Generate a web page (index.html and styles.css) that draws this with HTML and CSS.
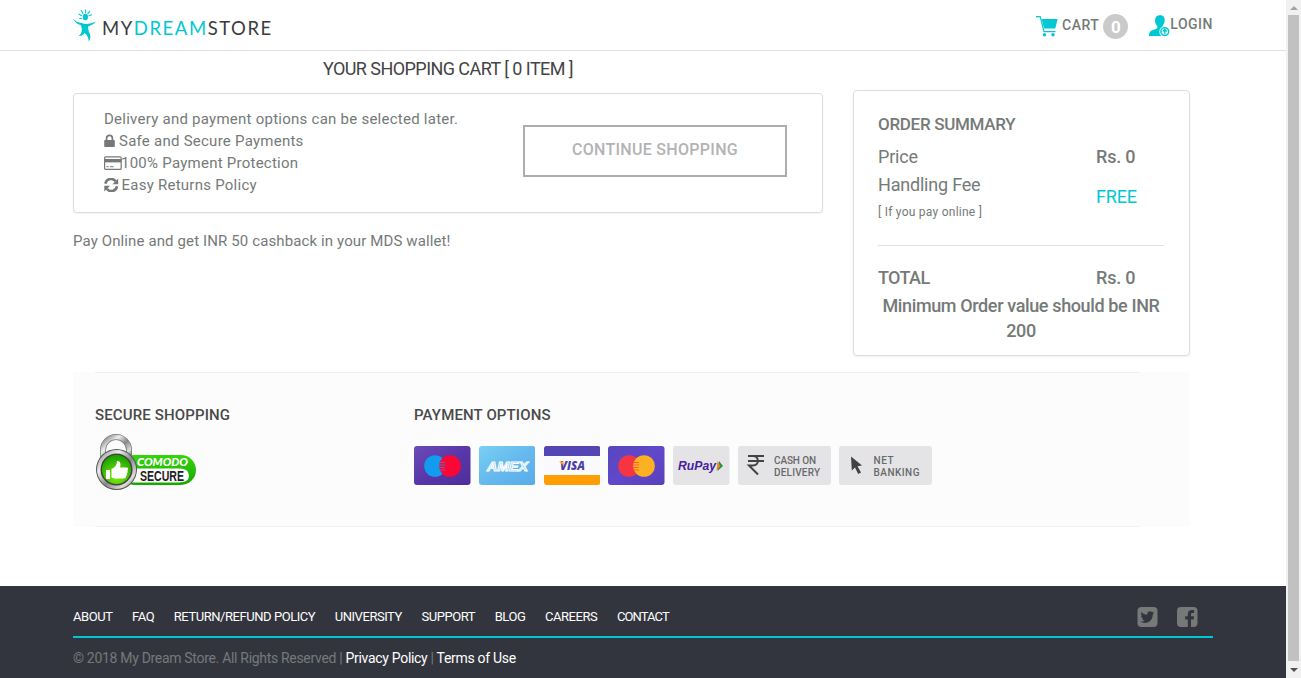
FILE: index.html
```html
<!DOCTYPE html>
<html lang="en">
<head>
<meta charset="utf-8">
<title>My Dream Store - Shopping Cart</title>
<link rel="stylesheet" href="styles.css">
</head>
<body>
<div class="window">
<div class="page">
  <header class="header">
    <div class="container header-row">
      <a class="logo">
        <svg class="logo-mark" width="24" height="33" viewBox="0 0 24 33" fill="#00c8d2">
          <ellipse cx="12.400" cy="8" rx="2.600" ry="3.300"/>
          <path d="M0 9.800c2 2.400 4.500 3.600 7.500 4 1.700.300 3 1.200 5.500 1.100 3.500-.100 6.500-.800 10-2.400-1.800 2.700-4.800 4-7.600 4.700-.600 3 .200 4.800 1.300 7.300 1 2.500 1 5-.800 8.200-.200-3.500-1.700-6.300-4.200-8.900-.900 2-2.700 3.100-6.200 3.200 2.200-1.400 3.200-3.300 3.300-5.900.100-2-.300-3.600-1.100-5C4.300 15.200 1.300 13.200 0 9.800z"/>
          <path d="M12.600 4V.600M10.200 4.800L8 1.400M14.600 4.800l2.500-3M9 6.800L5.500 5M15.500 7l3.300-1.200M9 9.200L6.200 9.700" stroke="#00c8d2" stroke-width="1.100" fill="none"/>
        </svg>
        <span class="logo-text">MY<b>DREAM</b>STORE</span>
      </a>
      <nav class="account">
        <a class="cart">
          <svg width="22" height="22" viewBox="0 0 22 22" fill="#00c8d2">
            <path d="M0 .6h4.200L8 15.600h11.500" fill="none" stroke="#00c8d2" stroke-width="1.200"/>
            <path d="M5.600 3h16l-2.300 9.500H8z"/><circle cx="8.500" cy="18.800" r="1.700"/><circle cx="17" cy="18.800" r="1.700"/>
          </svg>
          <span class="cart-label">CART</span><span class="badge">0</span>
        </a>
        <a class="login">
          <svg width="21" height="22" viewBox="0 0 21 22" fill="#00c8d2">
            <path d="M6 5.500C6 2 8 .2 11 .2s5 1.900 4.700 5.300C15.400 8.500 14 10 13.500 11.500c0 2.500 3.500 2 4.500 4.500v5H0c0-4 1.500-5.200 4.500-6.200 2.500-.8 4-1.200 4-3.300C7 9.500 6 8 6 5.500z"/>
            <circle cx="15.800" cy="16.600" r="5.500" fill="#fff"/><circle cx="15.800" cy="16.600" r="3.900" fill="#fff" stroke="#00c8d2" stroke-width="1.500"/>
            <path d="M15.800 19.200v-4M13.700 16.500l2.100-2.100 2.100 2.100" fill="none" stroke="#00c8d2" stroke-width="1.400"/>
          </svg>
          <span class="login-label">LOGIN</span>
        </a>
      </nav>
    </div>
  </header>

  <main class="container">
    <div class="columns">
      <section class="left">
        <h1 class="title">YOUR SHOPPING CART [ 0 ITEM ]</h1>
        <div class="card info">
          <div class="perks">
            <div>Delivery and payment options can be selected later.</div>
            <div><svg class="ico-lock" width="11" height="14" viewBox="0 0 11 14"><path d="M1 6h9a.8.8 0 0 1 .8.800v5.400a.8.8 0 0 1-.8.800H1a.8.8 0 0 1-.8-.8V6.800A.8.8 0 0 1 1 6z" fill="#757a78"/><path d="M2.600 6.500V4.300a2.900 2.900 0 0 1 5.800 0v2.200" fill="none" stroke="#757a78" stroke-width="1.700"/></svg>Safe and Secure Payments</div>
            <div><svg class="ico-card" width="18" height="14" viewBox="0 0 18 14"><rect x=".6" y=".8" width="16.600" height="12.600" rx="1" fill="none" stroke="#757a78" stroke-width="1.200"/><path d="M.6 3h16.600v3.400H.6z" fill="#757a78"/><path d="M2.400 10.700h2.300M6 10.700h3.600" stroke="#757a78"/></svg>100% Payment Protection</div>
            <div><svg class="ico-sync" width="15" height="14" viewBox="0 0 15 14"><path d="M1.400 5.700A5.600 5.600 0 0 1 11.600 3.400M13 8.300A5.600 5.600 0 0 1 2.800 10.600" fill="none" stroke="#757a78" stroke-width="2.500"/><path d="M14.200.500v5.700H8.500zM.3 13.500V7.800H6z" fill="#757a78"/></svg>Easy Returns Policy</div>
          </div>
          <a class="button">CONTINUE SHOPPING</a>
        </div>
        <p class="promo">Pay Online and get INR 50 cashback in your MDS wallet!</p>
      </section>

      <aside class="card summary">
        <h2>ORDER SUMMARY</h2>
        <div class="line price"><span>Price</span><strong>Rs. 0</strong></div>
        <div class="line fee"><div><div>Handling Fee</div><small>[ If you pay online ]</small></div><span class="free">FREE</span></div>
        <div class="line total"><strong class="total-label">TOTAL</strong><strong>Rs. 0</strong></div>
        <p class="minimum">Minimum Order value should be INR 200</p>
      </aside>
    </div>

    <section class="trust">
      <div class="secure">
        <h3>SECURE SHOPPING</h3>
        <svg class="comodo" width="104" height="60" viewBox="0 0 104 60">
          <defs>
            <linearGradient id="steel" x1="0" y1="0" x2="1" y2="1"><stop offset="0" stop-color="#777"/><stop offset=".3" stop-color="#eee"/><stop offset=".55" stop-color="#888"/><stop offset=".8" stop-color="#ddd"/><stop offset="1" stop-color="#444"/></linearGradient>
            <linearGradient id="pill" x1="0" y1="0" x2="0" y2="1"><stop offset="0" stop-color="#35d60d"/><stop offset="1" stop-color="#18a600"/></linearGradient>
            <radialGradient id="orb" cx=".5" cy=".75" r=".7"><stop offset="0" stop-color="#86ed10"/><stop offset="1" stop-color="#1ba400"/></radialGradient>
          </defs>
          <path d="M8 27V17a13 13 0 0 1 26 0v10" fill="none" stroke="#777" stroke-width="6"/>
          <path d="M8 27V17a13 13 0 0 1 26 0v10" fill="none" stroke="url(#steel)" stroke-width="4.500"/>
          <rect x="24" y="22" width="77" height="30" rx="15" fill="url(#pill)"/>
          <path d="M38 35.500h46q10 0 10 7T84 49.500H34z" fill="#fff"/>
          <circle cx="21.500" cy="36.500" r="20.500" fill="#555"/><circle cx="21.500" cy="36.500" r="19.500" fill="url(#steel)"/>
          <circle cx="21.500" cy="36.500" r="16" fill="#3c463a"/><circle cx="21.500" cy="36.500" r="14.500" fill="url(#orb)"/>
          <path d="M11 37h4v9h-4zM16.500 36c3.500-1.500 5.500-4 5.500-8 3-.5 4.300 2.500 3 6.500h6.500c2 0 2 2.500.8 3 .8 1 .4 2.300-.4 2.800.5 1.200 0 2.200-.9 2.500.2 1.500-.5 2.700-2.500 2.700h-9l-3-1z" fill="#fff"/>
          <text x="42" y="32.500" textLength="51" lengthAdjust="spacingAndGlyphs" class="comodo-name">COMODO</text>
          <text x="45" y="47.500" textLength="44" lengthAdjust="spacingAndGlyphs" class="comodo-secure">SECURE</text>
        </svg>
      </div>
      <div class="payments">
        <h3>PAYMENT OPTIONS</h3>
        <div class="methods">
          <svg width="56.500" height="39" viewBox="0 0 56.500 39"><defs><linearGradient id="mae" x2="1" y2="1"><stop stop-color="#6b4bb8"/><stop offset=".5" stop-color="#5a37a8"/><stop offset="1" stop-color="#4e2d9c"/></linearGradient></defs><rect width="56.500" height="39" rx="3" fill="url(#mae)"/><circle cx="21" cy="20" r="10.800" fill="#129cf0"/><circle cx="36" cy="20" r="10.800" fill="#fb0635"/><path d="M26 16.500h5M25 19h6M25 21.500h6M26 24h5" stroke="#6d63bf"/></svg>
          <svg width="56.500" height="39" viewBox="0 0 56.500 39"><defs><linearGradient id="amx" x2="1" y2="1"><stop stop-color="#79d0f3"/><stop offset=".5" stop-color="#65b9ee"/><stop offset="1" stop-color="#58ade9"/></linearGradient></defs><rect width="56.500" height="39" rx="3" fill="url(#amx)"/><text x="8" y="25" textLength="41" lengthAdjust="spacingAndGlyphs" class="amex">AMEX</text></svg>
          <svg width="56.500" height="39" viewBox="0 0 56.500 39"><rect width="56.500" height="39" rx="3" fill="#ff9d05"/><path d="M0 10V3a3 3 0 0 1 3-3h50.500a3 3 0 0 1 3 3v7z" fill="#5546b5"/><path d="M0 10h56.500v19H0z" fill="#fafafc"/><text x="16" y="24" textLength="25" lengthAdjust="spacingAndGlyphs" class="visa">VISA</text><path d="M15 15.500h4l1.200 4.500z" fill="#ffa31a"/></svg>
          <svg width="56.500" height="39" viewBox="0 0 56.500 39"><defs><linearGradient id="mc" x2="1" y2="1"><stop stop-color="#5746bd"/><stop offset=".5" stop-color="#6148cb"/><stop offset="1" stop-color="#5740bb"/></linearGradient></defs><rect width="56.500" height="39" rx="3" fill="url(#mc)"/><circle cx="21" cy="20" r="10.800" fill="#f53541"/><circle cx="36" cy="20" r="10.800" fill="#fdb021"/><path d="M26 16.500h5M25 19h6M25 21.500h6M26 24h5" stroke="#f36a31"/></svg>
          <svg width="56.500" height="39" viewBox="0 0 56.500 39"><rect width="56.500" height="39" rx="3" fill="#e4e4e7"/><text x="5" y="24" textLength="38" lengthAdjust="spacingAndGlyphs" class="rupay">RuPay</text><path d="M46 15l4 5-5.500 5z" fill="#16934c"/><path d="M44.500 15l3 5-4 5z" fill="#f58220"/></svg>
          <svg width="93" height="39" viewBox="0 0 93 39"><rect width="93" height="39" rx="3" fill="#e4e4e7"/><path d="M10 10h16M10 15h16M10 10h5c6.500 0 6.500 9.500 0 9.500h-4l9 9" fill="none" stroke="#414244" stroke-width="2"/><text x="36" y="17.500" textLength="42" class="method">CASH ON</text><text x="36" y="29.500" textLength="46" class="method">DELIVERY</text></svg>
          <svg width="93" height="39" viewBox="0 0 93 39"><rect width="93" height="39" rx="3" fill="#e4e4e7"/><path d="M12 10.500l11 9-4.500.800 3.500 6.200-2.800 1.500-3.200-6.500-3.200 3z" fill="#414244"/><text x="34.500" y="17.500" textLength="20" class="method">NET</text><text x="34.500" y="29.500" textLength="46" class="method">BANKING</text></svg>
        </div>
      </div>
    </section>
  </main>

  <footer class="footer">
    <div class="container">
      <div class="footer-row">
        <nav class="links"><a>ABOUT</a><a>FAQ</a><a>RETURN/REFUND POLICY</a><a>UNIVERSITY</a><a>SUPPORT</a><a>BLOG</a><a>CAREERS</a><a class="contact">CONTACT</a></nav>
        <div class="social">
          <svg width="21" height="20" viewBox="0 0 21 20"><rect x=".5" width="20" height="20" rx="4" fill="#757a78"/><path d="M17.300 5.800l-1.500 1.500c.1 5-3.500 8.600-7.800 8.600-1.700 0-3.200-.4-4.600-1.300 1.600.1 3-.3 4.200-1.200-1.300-.2-2.200-.9-2.600-2h1.200C4.800 10.900 4 9.800 4 8.400l1.200.3C4 7.700 3.700 6.300 4.500 4.900c1.500 1.800 3.300 2.700 5.700 2.900-.4-3.200 3-4.300 4.800-2.700l1.800-.6-1.200 1.600z" fill="#33353e"/></svg>
          <svg width="21" height="20" viewBox="0 0 21 20"><rect width="20.500" height="20" rx="4" fill="#757a78"/><path d="M10.800 20v-7.600H8.200V9.300h2.600V7c0-2.600 1.600-3.900 4-3.900h2.300v2.800h-1.500c-1.300 0-1.600.5-1.600 1.600v1.800h3l-.4 3.100H14V20z" fill="#33353e"/></svg>
        </div>
      </div>
      <p class="legal">© 2018 My Dream Store. All Rights Reserved | <a>Privacy Policy</a> | <a>Terms of Use</a></p>
    </div>
  </footer>
</div>
<div class="scrollbar">
  <svg width="15" height="15" viewBox="0 0 15 15"><path d="M4 10l4-4 4 4z" fill="#a3a3a3"/></svg>
  <div class="thumb"></div>
  <svg width="15" height="17" viewBox="0 0 15 17"><path d="M4 7h8l-4 4z" fill="#505050"/></svg>
</div>
</div>
</body>
</html>
```
FILE: styles.css
```css
* { box-sizing: border-box; margin: 0; padding: 0; }
body { font-family: Roboto, "Liberation Sans", sans-serif; font-size: 15px; color: #757a78; background: #fff; }
svg { display: block; flex: none; }
.window { display: flex; height: 678px; overflow: hidden; }
.page { width: 1286px; display: flex; flex-direction: column; }
.container { width: 1140px; margin: 0 auto; }
.header { height: 51px; border-bottom: 1px solid #e1e1e1; }
.header-row { display: flex; justify-content: space-between; }
.logo { display: flex; padding-top: 9px; gap: 5px; }
.logo-text { font: 18.5px/24px Lato, sans-serif; letter-spacing: 1.55px; color: #3b3b3d; padding-top: 7px; }
.logo-text b { color: #00c8d2; font-weight: 400; }
.account { display: flex; font-size: 14px; font-weight: 500; letter-spacing: .5px; line-height: 20px; }
.cart { display: flex; padding: 14px 21px 0 0; gap: 4px; }
.cart svg { margin-top: 2px; }
.cart-label { padding-top: 1px; }
.badge { width: 25px; height: 25px; border-radius: 50%; background: #cacaca; color: #fff; font-size: 17px; line-height: 26px; text-align: center; letter-spacing: 0; font-weight: 700; }
.login { display: flex; padding-top: 14px; }
.login svg { margin-top: 1px; }

.columns { display: grid; grid-template-columns: 750px 337px; gap: 30px; height: 321px; align-items: start; }
.title { font-size: 18px; font-weight: 400; line-height: 24px; letter-spacing: -.56px; color: #444; text-align: center; padding-top: 6px; margin-bottom: 12px; }
.card { border: 1px solid #dcdcdc; border-radius: 4px; box-shadow: 0 1px 2px rgba(0,0,0,.06); }
.info { height: 120px; padding: 14px 35px 0 30px; display: flex; justify-content: space-between; }
.perks { line-height: 22px; letter-spacing: .25px; }
.perks > div { display: flex; align-items: center; height: 22px; }
.ico-lock { margin-right: 4px; }
.ico-card { margin-right: -1px; }
.ico-sync { margin-right: 2.5px; }
.button { width: 264px; height: 52px; margin-top: 17px; border: 2px solid #adadad; color: #b3b3b3; font-size: 16px; font-weight: 500; letter-spacing: .3px; text-align: center; line-height: 46px; }
.promo { line-height: 22px; letter-spacing: .12px; padding-top: 17px; }
.summary { height: 266px; margin-top: 39px; padding: 22px 25px 0 24px; font-size: 18px; letter-spacing: -.2px; }
.summary h2 { font-size: 17px; line-height: 22px; font-weight: 500; letter-spacing: -.3px; }
.summary strong { font-weight: 500; }
.line { display: grid; grid-template-columns: 218px 1fr; line-height: 28px; }
.price { padding-top: 8px; }
.fee { height: 75px; border-bottom: 1px solid #e1e1e1; }
.fee small { display: block; font-size: 12px; line-height: 26px; letter-spacing: .25px; }
.free { color: #00c8d2; padding-top: 12px; }
.total { padding-top: 18px; }
.total-label { letter-spacing: -.6px; }
.minimum { text-align: center; font-weight: 500; line-height: 25px; letter-spacing: -.37px; padding-top: 1px; }

.trust { width: 1117px; height: 155px; display: flex; padding: 32px 22px 0; background: linear-gradient(#efefef, #efefef) 22px 0 / 1045px 1px no-repeat, linear-gradient(#f1f1f1, #f1f1f1) 22px 100% / 1045px 1px no-repeat, #fcfcfc; }
.trust h3 { font-size: 15px; font-weight: 500; line-height: 22px; letter-spacing: .14px; color: #4a4a4a; }
.secure { width: 319px; }
.comodo { margin-top: 7px; }
.comodo-name { font: italic 900 10.5px Lato; fill: #fff; }
.comodo-secure { font: bold 14px "Liberation Sans"; fill: #222; }
.methods { display: flex; gap: 8.300px; margin-top: 20px; }
.amex { font: italic bold 13px "Liberation Sans"; fill: #8bcaf2; stroke: #fff; stroke-width: 1; }
.visa { font: italic 800 11.5px "Open Sans"; fill: #4b3fa8; }
.rupay { font: italic bold 13px "Liberation Sans"; fill: #46229c; }
.method { font: 500 10px Roboto; fill: #69696b; }

.footer { margin-top: 59px; height: 92px; background: #33353e; color: #757a78; }
.footer-row { height: 52px; border-bottom: 2px solid #00c8d2; display: flex; justify-content: space-between; padding: 21px 15px 0 0; }
.links { display: flex; gap: 19.600px; font-size: 13px; line-height: 20px; letter-spacing: -.45px; color: #fff; }
.contact { letter-spacing: -.9px; }
.social { display: flex; gap: 19px; }
.legal { font-size: 14px; line-height: 20px; letter-spacing: -.31px; padding-top: 10px; }
.legal a { color: #fff; }

.scrollbar { width: 15px; background: #f1f1f1; display: flex; flex-direction: column; }
.thumb { width: 11px; height: 646px; margin-left: 2px; background: #c1c1c1; }
```
